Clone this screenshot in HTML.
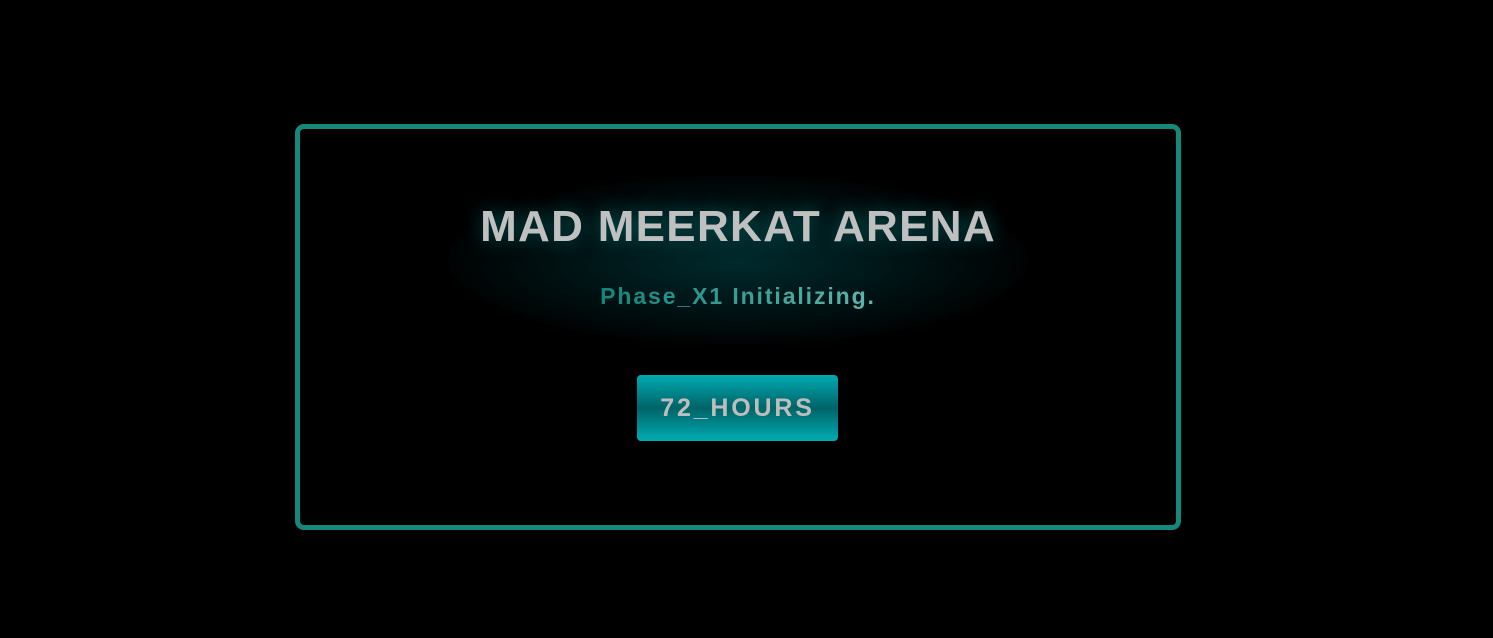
<!DOCTYPE html>
<html><head><style>
html,body{margin:0;padding:0;background:#000;width:1493px;height:638px;overflow:hidden;font-family:"Liberation Sans",sans-serif}
.card{position:absolute;left:295px;top:124px;width:876px;height:396px;border:5px solid #14897b;border-radius:9px}
.glow{position:absolute;left:448px;top:175px;width:580px;height:170px;border-radius:50%;background:radial-gradient(ellipse at center,rgba(0,85,90,.5),rgba(0,45,50,.25) 55%,rgba(0,0,0,0) 75%)}
.c{position:absolute;left:0;width:1476px;text-align:center}
h1{top:203px;margin:0;font-size:44px;font-weight:bold;color:#c0c0c0;letter-spacing:1.3px;line-height:48px;text-shadow:0 0 18px rgba(0,150,150,.5)}
.sub{top:282px;font-size:23px;font-weight:bold;line-height:28px;letter-spacing:1.9px}
.sub span{background:linear-gradient(90deg,#12857a,#5fb5ad);-webkit-background-clip:text;background-clip:text;color:transparent}
.btn{position:absolute;left:637px;top:375px;width:201px;height:66px;border-radius:4px;background:linear-gradient(#00aab2,#006468 50%,#00acb3);color:#bdbdbd;font-weight:bold;font-size:25px;text-align:center;line-height:66px;letter-spacing:2.8px}
</style></head><body>
<div class="card"></div>
<div class="glow"></div>
<h1 class="c">MAD MEERKAT ARENA</h1>
<div class="sub c"><span>Phase_X1 Initializing.</span></div>
<div class="btn">72_HOURS</div>
</body></html>
